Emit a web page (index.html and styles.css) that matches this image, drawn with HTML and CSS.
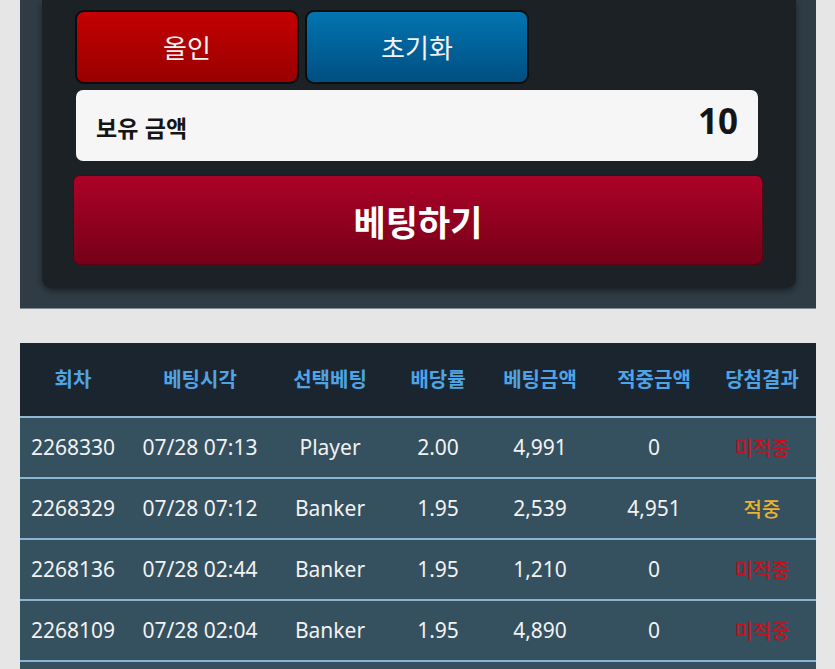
FILE: index.html
```html
<!DOCTYPE html>
<html lang="ko">
<head>
    <meta charset="UTF-8">
    <meta name="viewport" content="width=device-width, initial-scale=1.0">
    <title>베팅</title>
    <link rel="stylesheet" href="styles.css">
</head>
<body>

<div class="bet-panel">
    <div class="bet-box">
        <div class="quick-row">
            <button class="btn btn-allin">올인</button>
            <button class="btn btn-reset">초기화</button>
        </div>
        <div class="balance">
            <span class="balance-label">보유 금액</span>
            <span class="balance-value">10</span>
        </div>
        <button class="btn-bet">베팅하기</button>
    </div>
</div>

<table class="history">
    <colgroup>
        <col style="width:106px">
        <col style="width:148px">
        <col style="width:112px">
        <col style="width:104px">
        <col style="width:100px">
        <col style="width:128px">
        <col style="width:98px">
    </colgroup>
    <thead>
        <tr>
            <th>회차</th>
            <th>베팅시각</th>
            <th>선택베팅</th>
            <th>배당률</th>
            <th>베팅금액</th>
            <th>적중금액</th>
            <th class="result">당첨결과</th>
        </tr>
    </thead>
    <tbody>
        <tr>
            <td>2268330</td>
            <td>07/28 07:13</td>
            <td>Player</td>
            <td>2.00</td>
            <td>4,991</td>
            <td>0</td>
            <td class="result lose">미적중</td>
        </tr>
        <tr>
            <td>2268329</td>
            <td>07/28 07:12</td>
            <td>Banker</td>
            <td>1.95</td>
            <td>2,539</td>
            <td>4,951</td>
            <td class="result win">적중</td>
        </tr>
        <tr>
            <td>2268136</td>
            <td>07/28 02:44</td>
            <td>Banker</td>
            <td>1.95</td>
            <td>1,210</td>
            <td>0</td>
            <td class="result lose">미적중</td>
        </tr>
        <tr>
            <td>2268109</td>
            <td>07/28 02:04</td>
            <td>Banker</td>
            <td>1.95</td>
            <td>4,890</td>
            <td>0</td>
            <td class="result lose">미적중</td>
        </tr>
        <tr class="empty">
            <td></td><td></td><td></td><td></td><td></td><td></td><td></td>
        </tr>
    </tbody>
</table>

</body>
</html>
```

FILE: styles.css
```css
body {
    font-family: 'Noto Sans', 'Noto Sans CJK KR', sans-serif;
    margin: 0;
    background-color: #e6e6e6;
    color: #f2f2f2;
    overflow: hidden;
}

.bet-panel {
    margin: 0 19px 0 20px;
    padding: 0 20px 20px 22px;
    background-color: #2f3c46;
    border-bottom: 1px solid #7d8b95;
}

.bet-box {
    background-color: #1c2126;
    border-radius: 0 0 10px 10px;
    box-shadow: 0 3px 6px rgba(0, 0, 0, 0.45);
    padding: 10px 33px 23px 31px;
}

.quick-row {
    display: flex;
    gap: 6px;
    padding-left: 2px;
}

.btn {
    width: 224px;
    height: 74px;
    border: 2px solid #0b0d0f;
    border-radius: 9px;
    color: #f4f4f4;
    font-family: 'Noto Sans CJK KR', sans-serif;
    font-size: 26px;
    padding: 0 0 2px;
}

.btn-allin {
    background: linear-gradient(#c40003, #990000);
}

.btn-reset {
    background: linear-gradient(#0274b0, #004f82);
}

.balance {
    display: flex;
    justify-content: space-between;
    align-items: center;
    margin: 6px 5px 0 3px;
    height: 71px;
    padding: 0 20px;
    background-color: #f6f6f6;
    border-radius: 7px;
    color: #151515;
}

.balance-label {
    font-family: 'Noto Sans CJK KR', sans-serif;
    font-weight: 700;
    font-size: 23px;
    margin-top: 2px;
}

.balance-value {
    font-weight: 700;
    font-size: 35px;
    margin-bottom: 10px;
}

.btn-bet {
    display: block;
    width: 690px;
    height: 90px;
    margin: 14px 0 0 0;
    border: 1px solid #5a0010;
    border-radius: 7px;
    background: linear-gradient(#ac0228, #760018);
    color: #ffffff;
    font-family: 'Noto Sans CJK KR', sans-serif;
    font-weight: 700;
    font-size: 35px;
    padding: 0;
}

.history {
    margin: 34px 19px 0 20px;
    width: 796px;
    border-collapse: collapse;
    table-layout: fixed;
}

.history th {
    height: 71px;
    background-color: #1b2530;
    color: #4ea4e4;
    font-family: 'Noto Sans CJK KR', sans-serif;
    font-weight: 700;
    font-size: 20px;
    padding: 0 0 2px;
    border-bottom: 2px solid #8fb9d6;
}

.history td {
    height: 58px;
    padding: 0 0 1px;
    text-align: center;
    font-size: 21px;
    background-color: #35505f;
    border-bottom: 2px solid #8ab6d4;
}

.history .result {
    padding-right: 10px;
}

.history td.lose {
    color: #c4111c;
    font-family: 'Noto Sans CJK KR', sans-serif;
    font-weight: 500;
    font-size: 20px;
}

.history td.win {
    color: #eab330;
    font-family: 'Noto Sans CJK KR', sans-serif;
    font-weight: 500;
    font-size: 20px;
}
```
